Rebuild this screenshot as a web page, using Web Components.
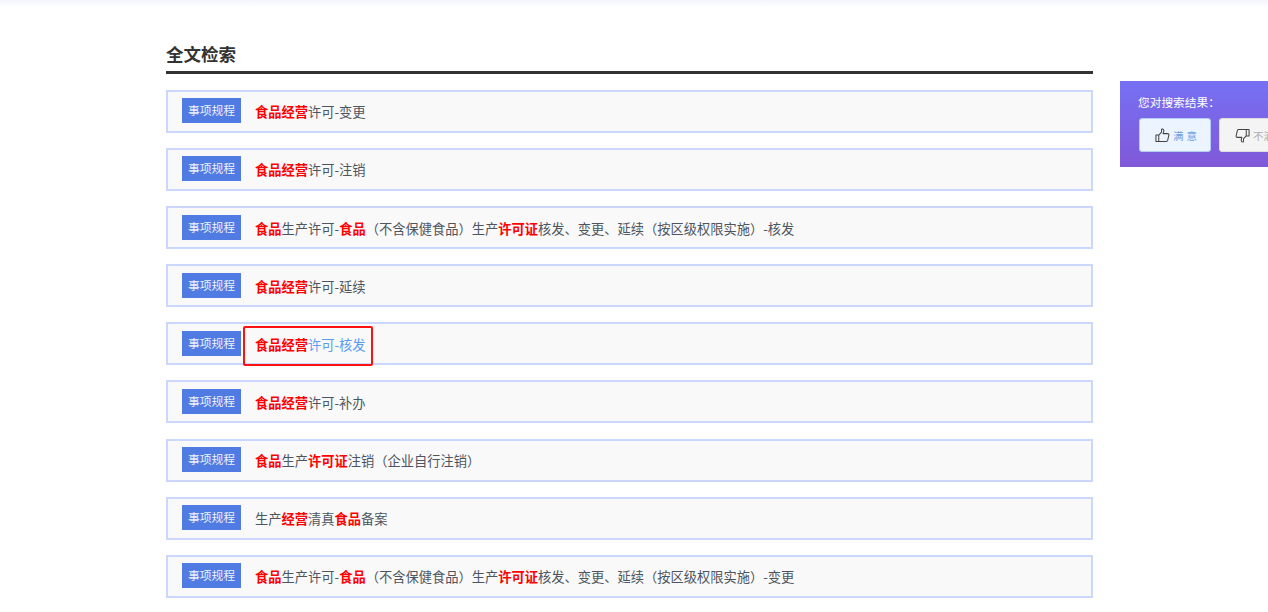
<!DOCTYPE html>
<html lang="zh">
<head>
<meta charset="utf-8">
<title>全文检索</title>
<style>
  html, body { margin: 0; height: 100%; overflow: hidden; background: #fff; }
  body { font-family: "Noto Sans CJK SC", "Liberation Sans", sans-serif; }
</style>
</head>
<body>
<search-page>
  <search-row><em>食品经营</em>许可-变更</search-row>
  <search-row><em>食品经营</em>许可-注销</search-row>
  <search-row><em>食品</em>生产许可-<em>食品</em>（不含保健食品）生产<em>许可证</em>核发、变更、延续（按区级权限实施）-核发</search-row>
  <search-row><em>食品经营</em>许可-延续</search-row>
  <search-row active><em>食品经营</em>许可-核发</search-row>
  <search-row><em>食品经营</em>许可-补办</search-row>
  <search-row><em>食品</em>生产<em>许可证</em>注销（企业自行注销）</search-row>
  <search-row>生产<em>经营</em>清真<em>食品</em>备案</search-row>
  <search-row><em>食品</em>生产许可-<em>食品</em>（不含保健食品）生产<em>许可证</em>核发、变更、延续（按区级权限实施）-变更</search-row>
</search-page>
<feedback-panel></feedback-panel>

<script>
class SearchPage extends HTMLElement {
    constructor() {
        super();
        this.attachShadow({ mode: 'open' });
        this.shadowRoot.innerHTML = `
            <style>
              :host { display: block; }
              .strip { height: 8px; background: linear-gradient(#f3f5fc, #fff); }
              .main { width: 927px; margin-left: 166px; padding-top: 33px; }
              h2 {
                margin: 0;
                height: 30px;
                line-height: 25px;
                font-size: 17.5px;
                font-weight: 700;
                color: #333;
                border-bottom: 3px solid #333;
              }
              .list { display: flex; flex-direction: column; gap: 15.1px; margin-top: 16px; }
            </style>
            <div class="strip"></div>
            <div class="main">
              <h2>全文检索</h2>
              <div class="list"><slot></slot></div>
            </div>
        `;
    }
}

class SearchRow extends HTMLElement {
    constructor() {
        super();
        this.attachShadow({ mode: 'open' });
        this.shadowRoot.innerHTML = `
            <style>
              :host {
                display: flex;
                box-sizing: border-box;
                height: 43px;
                padding: 6.4px 0 0 14px;
                background: #f9f9f9;
                border: 2px solid #cbd7fd;
                font-size: 13.25px;
                color: #4c5560;
              }
              :host([active]) { color: #5b9bf0; }
              .tag {
                flex: none;
                width: 59px;
                height: 25px;
                line-height: 24.6px;
                text-align: center;
                font-size: 11.8px;
                color: #eef2fd;
                background: #4f7be3;
              }
              .text { position: relative; margin-left: 14px; height: 25px; line-height: 27.4px; white-space: nowrap; }
              ::slotted(em) { font-style: normal; font-weight: 700; color: #f00; }
              .mark {
                position: absolute;
                left: -12px;
                top: -5px;
                width: 126px;
                height: 36px;
                border: 2px solid #f11;
                border-radius: 2px;
              }
            </style>
            <span class="tag">事项规程</span>
            <div class="text"><slot></slot></div>
        `;
    }

    connectedCallback() {
        if (this.hasAttribute('active')) {
            const mark = document.createElement('div');
            mark.className = 'mark';
            this.shadowRoot.querySelector('.text').appendChild(mark);
        }
    }
}

class FeedbackPanel extends HTMLElement {
    constructor() {
        super();
        this.attachShadow({ mode: 'open' });
        this.shadowRoot.innerHTML = `
            <style>
              :host {
                position: absolute;
                left: 1120px;
                top: 81px;
                width: 190px;
                height: 86px;
                box-sizing: border-box;
                padding: 12px 0 0 19px;
                background: linear-gradient(#7670f3, #8059d8);
                color: #fff;
              }
              .label { font-size: 11.7px; line-height: 17px; height: 25px; margin-left: -1px; }
              .btns { display: flex; gap: 8px; }
              .btn {
                flex: none;
                box-sizing: border-box;
                width: 72px;
                height: 34px;
                padding-left: 15px;
                display: flex;
                align-items: center;
                gap: 3px;
                border-radius: 3px;
                font-size: 10.5px;
                letter-spacing: 3px;
                white-space: nowrap;
                border: 1px solid #b4cdf6;
                background: #ecf4ff;
                color: #6b9fe0;
              }
              .btn.no { width: 88px; background: #f4f4f4; border-color: #ddd; color: #aaa; letter-spacing: 0; }
              svg { width: 15px; height: 15px; fill: none; stroke: #444; stroke-width: 1.1; stroke-linejoin: round; flex: none; }
              .btn.no svg { transform: scaleX(-1); }
            </style>
            <div class="label">您对搜索结果：</div>
            <div class="btns">
              <div class="btn">
                <svg viewBox="0 0 16 16"><path d="M1 7.5h3v7H1zM4 7.5l3-3.2V1.6c0-.9 2.4-.8 2.4 1.2 0 1.2-.5 2.2-.8 3.2h4.9c1 0 1.5.8 1.3 1.6l-1.3 5.6c-.2.7-.7 1.1-1.4 1.1H4"/></svg>
                <span>满意</span>
              </div>
              <div class="btn no">
                <svg viewBox="0 0 16 16"><path d="M1 8.5h3v-7H1zM4 8.5l3 3.2v2.7c0 .9 2.4.8 2.4-1.2 0-1.2-.5-2.2-.8-3.2h4.9c1 0 1.5-.8 1.3-1.6l-1.3-5.6c-.2-.7-.7-1.1-1.4-1.1H4"/></svg>
                <span>不满意</span>
              </div>
            </div>
        `;
    }
}

customElements.define('search-page', SearchPage);
customElements.define('search-row', SearchRow);
customElements.define('feedback-panel', FeedbackPanel);
</script>
</body>
</html>
